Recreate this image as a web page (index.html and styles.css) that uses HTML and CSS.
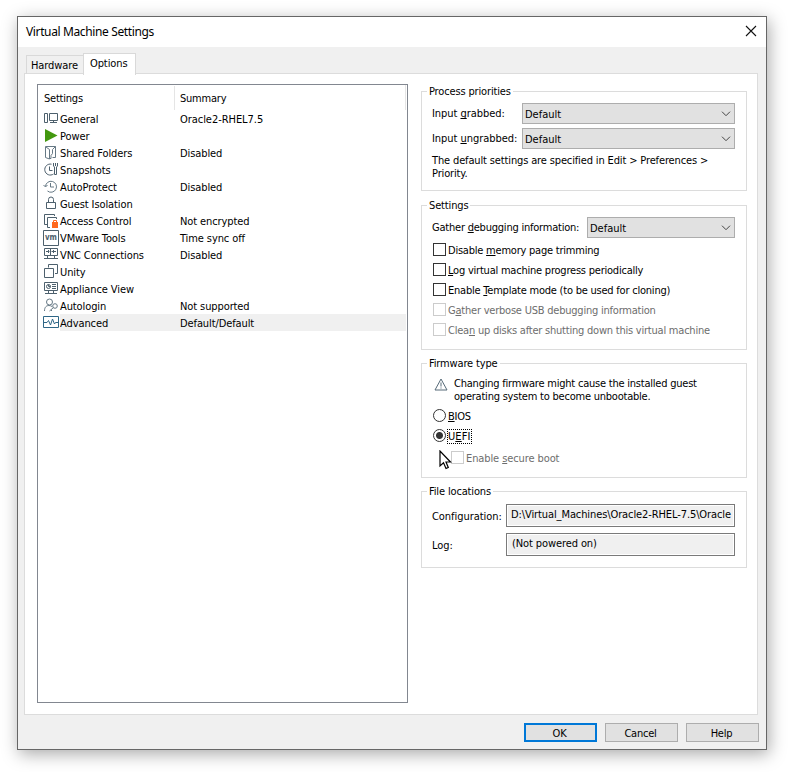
FILE: index.html
```html
<!DOCTYPE html>
<html lang="en">
<head>
<meta charset="utf-8">
<title>Virtual Machine Settings</title>
<link rel="stylesheet" href="styles.css">
</head>
<body>
<main class="window">
  <header class="titlebar"><span class="title">Virtual Machine Settings</span>
    <svg class="close" width="12" height="12" viewBox="0 0 12 12"><path d="M1 1L11 11M11 1L1 11"/></svg>
  </header>
  <nav class="tabs"><span class="tab">Hardware</span><span class="tab active">Options</span></nav>
  <section class="panel">
    <div class="list">
      <div class="head"><span class="c1">Settings</span><span class="c2">Summary</span></div>
      <div class="row"><svg class="ic" viewBox="0 0 16 16"><path d="M1.500 2.500h3v9h-3zM6.500 2.500h8v7h-8zM10.500 9.500v2M7 11.500h7"/></svg><span class="name">General</span><span class="wide-text">Oracle2-RHEL7.5</span></div>
      <div class="row"><svg class="ic" viewBox="0 0 16 16"><path class="play" d="M2 1L14.500 7.500L2 14z"/></svg><span class="name">Power</span></div>
      <div class="row"><svg class="ic pale" viewBox="0 0 16 16"><path d="M2.500 1.500h10v11h-3M2.500 1.500v11l4 1.500V4.500L3 2M12.500 1.500l-3 3v4l-1.500 2v3H6.500"/></svg><span class="name">Shared Folders</span><span>Disabled</span></div>
      <div class="row"><svg class="ic" viewBox="0 0 16 16"><path d="M8.500 2.200A5.500 5.500 0 1 0 10.500 12M6.500 4.500v4h3"/><path d="M10.500 1v3l1 1v7.500h2V5l1-1V1M12.500 1v3"/></svg><span class="name">Snapshots</span></div>
      <div class="row"><svg class="ic pale" viewBox="0 0 16 16"><path d="M2.500 7.500A5.500 5.500 0 1 1 4.500 12M.5 6l2 2 2-2M7.500 4v4h3.500"/></svg><span class="name">AutoProtect</span><span>Disabled</span></div>
      <div class="row"><svg class="ic" viewBox="0 0 16 16"><path d="M3.500 6.500h9v6h-9zM5.500 6.500v-3a2.500 2.500 0 0 1 5 0v3"/></svg><span class="name">Guest Isolation</span></div>
      <div class="row"><svg class="ic" viewBox="0 0 16 16"><path d="M4 11.500H1.500v-10h10V3M7 14.500H4.500v-10h9V6"/><path class="lock" d="M9 9h6v6H9z"/><path class="shackle" d="M10.500 9V7.500h3V9"/></svg><span class="name">Access Control</span><span>Not encrypted</span></div>
      <div class="row"><svg class="ic" viewBox="0 0 16 16"><path d="M.5.5h15v15H.5z"/><text class="vm" x="2" y="10" textLength="12" lengthAdjust="spacingAndGlyphs">vm</text></svg><span class="name">VMware Tools</span><span>Time sync off</span></div>
      <div class="row"><svg class="ic" viewBox="0 0 16 16"><path d="M1.500 1.500h13v7h-13zM7.500 1.500v7M1 11.500h14M4.500 9v2M11.500 9v2M3 4.500h3.500M5.500 3v3M8.500 4.500H13M10.500 3v3"/></svg><span class="name">VNC Connections</span><span>Disabled</span></div>
      <div class="row"><svg class="ic" viewBox="0 0 16 16"><path d="M1.500 4.500h9v9h-9zM5.500 3.500V.5h9v9H12"/></svg><span class="name">Unity</span></div>
      <div class="row"><svg class="ic" viewBox="0 0 16 16"><path d="M1.500 1.500h13v8h-13zM5.500 10v2M10.500 10v2M2 12.500h12M9 3.500h4M9 5.500h4M9 7.500h4"/><circle cx="5.500" cy="5.500" r="2"/><path d="M5.500 3.500v2h2"/></svg><span class="name">Appliance View</span></div>
      <div class="row"><svg class="ic pale" viewBox="0 0 16 16"><circle cx="6.500" cy="4" r="3"/><path d="M1.500 13c0-4 2-5.500 4.500-5.500q1.500 0 3 1M6.500 13l4-3.500M8 12l1 1"/><circle cx="12" cy="8" r="2.300"/></svg><span class="name">Autologin</span><span>Not supported</span></div>
      <div class="row sel"><svg class="ic adv" viewBox="0 0 16 16"><path d="M.5 1.500h15v11H.5z"/><path d="M1 7.500h3l1.500-2 2 4.500 2-6 2 5 1-1.500H15"/></svg><span class="name">Advanced</span><span>Default/Default</span></div>
    </div>
    <div class="groups">
      <div class="group g1"><div class="legend">Process priorities</div>
        <div class="select-line"><span>Input <u>g</u>rabbed:</span><div class="select wide"><span>Default</span><svg class="chev" viewBox="0 0 10 6"><path d="M1 .7l4 4 4-4"/></svg></div></div>
        <div class="select-line next"><span>Input <u>u</u>ngrabbed:</span><div class="select wide"><span>Default</span><svg class="chev" viewBox="0 0 10 6"><path d="M1 .7l4 4 4-4"/></svg></div></div>
        <p class="hint">The default settings are specified in Edit &gt; Preferences &gt;<br>Priority.</p>
      </div>
      <div class="group g2"><div class="legend">Settings</div>
        <div class="select-line"><span>Gather <u>d</u>ebugging information:</span><div class="select mid"><span>Default</span><svg class="chev" viewBox="0 0 10 6"><path d="M1 .7l4 4 4-4"/></svg></div></div>
        <div class="checks">
          <div class="check"><i class="box"></i><span>Disable <u>m</u>emory page trimming</span></div>
          <div class="check"><i class="box"></i><span><u>L</u>og virtual machine progress periodically</span></div>
          <div class="check"><i class="box"></i><span>Enable <u>T</u>emplate mode (to be used for cloning)</span></div>
          <div class="check off"><i class="box"></i><span>G<u>a</u>ther verbose USB debugging information</span></div>
          <div class="check off"><i class="box"></i><span>Clea<u>n</u> up disks after shutting down this virtual machine</span></div>
        </div>
      </div>
      <div class="group g3"><div class="legend">Firmware type</div>
        <div class="warn"><svg width="14" height="13" viewBox="0 0 14 13"><path d="M7 1L13 12H1zM7 4.500v4M7 9.500v1"/></svg><p>Changing firmware might cause the installed guest<br>operating system to become unbootable.</p></div>
        <div class="check"><i class="dot"></i><span><u>B</u>IOS</span></div>
        <div class="check"><i class="dot on"></i><span class="focus">U<u>E</u>FI</span></div>
        <div class="check off secure"><i class="box"></i><span>Enable <u>s</u>ecure boot</span>
          <svg class="cursor" width="13" height="20" viewBox="0 0 13 20"><path d="M1 1V16L4.500 12.800L7 18.500L9.300 17.500L7 12H11.500z"/></svg></div>
      </div>
      <div class="group g4"><div class="legend">File locations</div>
        <div class="file"><span class="fl">Configuration:</span><div class="field path">D:\Virtual_Machines\Oracle2-RHEL-7.5\Oracle</div></div>
        <div class="file"><span class="fl">Log:</span><div class="field">(Not powered on)</div></div>
      </div>
    </div>
  </section>
  <footer class="buttons"><div class="btn ok">OK</div><div class="btn">Cancel</div><div class="btn">Help</div></footer>
</main>
</body>
</html>
```
FILE: styles.css
```css
* { box-sizing: border-box; }
body { margin: 0; padding: 16px 0 0 17px; background: #fff; width: 788px; height: 772px; overflow: hidden;
  font: 11px/13px "DejaVu Sans Condensed", "DejaVu Sans", sans-serif; font-stretch: condensed; letter-spacing: -0.22px; color: #000; white-space: nowrap; }
p { margin: 0; }
u { text-decoration: underline; text-underline-offset: 1px; text-decoration-thickness: 1px; text-decoration-skip-ink: none; }
svg { display: block; flex: none; fill: none; stroke: #4d606d; stroke-width: 1; }
.window { width: 750px; height: 734px; border: 1px solid #666; background: #f0f0f0; box-shadow: 2px 4px 16px rgba(0,0,0,.34); }
.titlebar { height: 30px; background: #fff; display: flex; justify-content: space-between; align-items: center; padding: 0 9px 0 8px; }
.title { font: 12px/16px "Noto Sans", sans-serif; letter-spacing: -0.37px; }
.close { stroke: #111; stroke-width: 1.1; margin-top: -2px; }
.tabs { height: 27px; padding: 6px 0 0 8px; display: flex; align-items: flex-end; position: relative; z-index: 1; }
.tab { width: 58px; height: 19px; border: 1px solid #d9d9d9; border-bottom: 0; padding: 3px 0 0 4px; letter-spacing: -0.1px; }
.tab.active { width: 53px; height: 22px; background: #fff; margin: 0 0 -1px -1px; padding: 3px 0 0 6px; }
.panel { width: 734px; height: 642px; margin: -1px 0 0 6px; background: #fff; border: 1px solid #dcdcdc; padding: 10px 0 0 12px; display: flex; gap: 13px; }
.list { width: 371px; height: 619px; border: 1px solid #828790; }
.head { height: 25px; display: flex; margin-right: 1px; border-right: 1px solid #e5e5e5; }
.head span { padding: 7px 0 0 6px; }
.head .c1 { width: 136px; }
.head .c2 { border-left: 1px solid #e5e5e5; margin-top: 1px; padding: 6px 0 0 5px; }
.row { height: 17px; display: flex; align-items: center; padding-left: 5px; letter-spacing: -0.1px; }
.row span { padding-top: 2px; }
.ic { width: 16px; height: 16px; }
.pale { stroke: #667985; }
.name { width: 120px; margin-left: 1px; }
.wide-text { letter-spacing: -0.05px; }
.sel { background: linear-gradient(#f0f0f0,#f0f0f0) 22px 0 / 346px 17px no-repeat; }
.play { fill: #43980f; stroke: none; }
.lock { fill: #ff681c; stroke: none; }
.shackle { stroke: #ff681c; }
.vm { font: bold 8px "DejaVu Sans", sans-serif; fill: #4d606d; stroke: none; letter-spacing: 0; }
.adv { stroke: #2f6787; }
.groups { width: 326px; padding-top: 7px; display: flex; flex-direction: column; }
.group { border: 1px solid #dcdcdc; padding: 0 11px 0 10px; }
.legend { width: max-content; height: 13px; line-height: 13px; margin: -7px 0 0 -5px; padding: 0 2px; background: #fff; letter-spacing: -0.15px; }
.g1 { height: 100px; }
.g2 { height: 145px; margin-top: 14px; }
.g3 { height: 115px; margin-top: 13px; }
.g4 { height: 77px; margin-top: 13px; }
.select-line { display: flex; justify-content: space-between; margin-top: 5px; height: 21px; }
.select-line.next { margin-top: 4px; }
.select-line > span { padding-top: 4px; }
.g1 .select-line > span { letter-spacing: -0.05px; }
.select { height: 21px; background: #e1e1e1; border: 1px solid #adadad; display: flex; justify-content: space-between; padding: 4px 3px 0 2px; letter-spacing: 0; }
.wide { width: 213px; }
.mid { width: 148px; }
.chev { width: 10px; height: 6px; margin-top: 3px; stroke: #444; }
.hint { margin-top: 5px; letter-spacing: -0.14px; }
.checks { margin-top: 1px; }
.check { height: 20px; display: flex; align-items: center; }
.check > span { position: relative; top: 1px; }
.box, .dot { display: block; flex: none; width: 13px; height: 13px; margin: 0 2px 0 1px; border: 1px solid #333; background: #fff; }
.off { color: #6d6d6d; }
.off .box { border-color: #ccc; }
.dot { border-radius: 50%; }
.dot.on { background: radial-gradient(circle, #333 0 3px, #fff 4px); }
.warn { display: flex; gap: 6px; margin: 7px 0 2px 2px; }
.warn svg { margin-top: 1px; stroke: #566a78; }
.check > .focus { outline: 1px dotted #000; letter-spacing: 0.1px; }
.secure { margin: 2px 0 0 18px; position: relative; letter-spacing: -0.1px; }
.cursor { position: absolute; left: -11px; top: 3px; stroke: #000; fill: #fff; stroke-width: 1.2; }
.file { display: flex; justify-content: space-between; margin-top: 6px; height: 23px; }
.fl { padding-top: 6px; letter-spacing: -0.05px; }
.field { width: 229px; height: 23px; border: 1px solid #7a7a7a; box-shadow: inset 0 0 0 1px #fff; background: #f0f0f0; padding: 3px 0 0 5px; overflow: hidden; letter-spacing: -0.1px; }
.path { padding-left: 4px; }
.buttons { display: flex; justify-content: flex-end; gap: 8px; padding: 8px 7px 0 0; }
.btn { width: 73px; height: 19px; border: 1px solid #adadad; background: #e1e1e1; text-align: center; line-height: 19px; padding-right: 2px; }
.btn.ok { border: 2px solid #0078d7; line-height: 17px; }
```
